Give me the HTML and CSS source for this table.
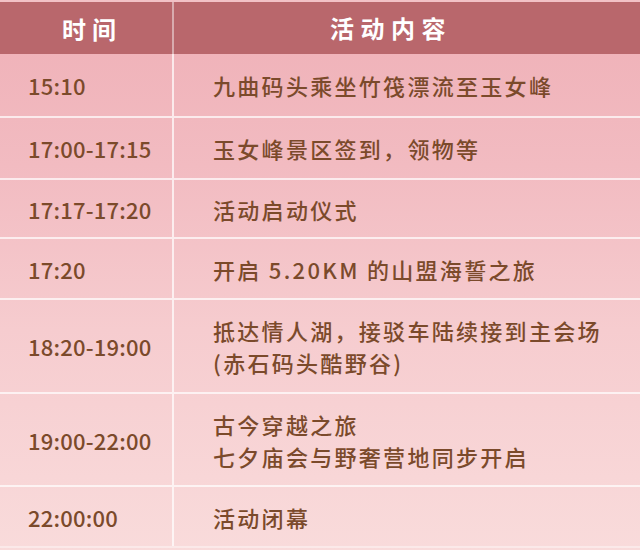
FILE: index.html
```html
<!DOCTYPE html>
<html lang="zh-CN">
<head>
<meta charset="utf-8">
<title>活动流程</title>
<link rel="stylesheet" href="styles.css">
</head>
<body>
<div class="schedule">
  <div class="row head">
    <div class="cell time"><span class="h-time">时间</span></div>
    <div class="cell act"><span class="h-act">活动内容</span></div>
  </div>
  <div class="row r1">
    <div class="cell time">15:10</div>
    <div class="cell act">九曲码头乘坐竹筏漂流至玉女峰</div>
  </div>
  <div class="row r2">
    <div class="cell time">17:00-17:15</div>
    <div class="cell act">玉女峰景区签到，领物等</div>
  </div>
  <div class="row r3">
    <div class="cell time">17:17-17:20</div>
    <div class="cell act">活动启动仪式</div>
  </div>
  <div class="row r4">
    <div class="cell time">17:20</div>
    <div class="cell act">开启 5.20KM 的山盟海誓之旅</div>
  </div>
  <div class="row r5">
    <div class="cell time">18:20-19:00</div>
    <div class="cell act">抵达情人湖，接驳车陆续接到主会场<br>(赤石码头酷野谷)</div>
  </div>
  <div class="row r6">
    <div class="cell time">19:00-22:00</div>
    <div class="cell act">古今穿越之旅<br>七夕庙会与野奢营地同步开启</div>
  </div>
  <div class="row r7">
    <div class="cell time">22:00:00</div>
    <div class="cell act">活动闭幕</div>
  </div>
</div>
</body>
</html>
```

FILE: styles.css
```css
html, body {
  margin: 0;
  padding: 0;
}
body {
  width: 640px;
  height: 550px;
  overflow: hidden;
  background: linear-gradient(180deg, #efb0b7 0%, #f2bbc1 30%, #f6cccf 60%, #f9dbdb 100%);
  font-family: "Noto Sans CJK SC", "Noto Sans", sans-serif;
  color: #7b4a2b;
}
.schedule {
  display: flex;
  flex-direction: column;
  width: 640px;
  border-top: 2px solid rgba(255, 255, 255, 0.22);
}
.row {
  display: grid;
  grid-template-columns: 174px 1fr;
  border-bottom: 2px solid rgba(255, 255, 255, 0.7);
  box-sizing: border-box;
}
.cell {
  display: flex;
  align-items: center;
  font-size: 22px;
  font-weight: 500;
}
.cell.time {
  padding-left: 28px;
  letter-spacing: 0.2px;
  border-right: 2px solid rgba(255, 255, 255, 0.7);
}
.cell.act {
  padding-left: 39px;
  letter-spacing: 2.3px;
  line-height: 32px;
  display: block;
  align-self: center;
}
.head {
  height: 52px;
  background: #b9676c;
  border-bottom: none;
}
.head .cell {
  color: #ffffff;
  font-size: 24px;
  font-weight: 700;
  letter-spacing: 6px;
}
.head .cell.time {
  padding-left: 62px;
  border-right-color: rgba(255, 255, 255, 0.45);
}
.head .cell.act {
  padding-left: 156px;
  letter-spacing: 6.5px;
}
.r1 { height: 64px; }
.r2 { height: 62px; }
.r3 { height: 59px; }
.r4 { height: 61px; }
.r5 { height: 94px; }
.r6 { height: 93px; }
.r7 { height: 61px; border-bottom-color: rgba(255, 255, 255, 0.4); }
```
